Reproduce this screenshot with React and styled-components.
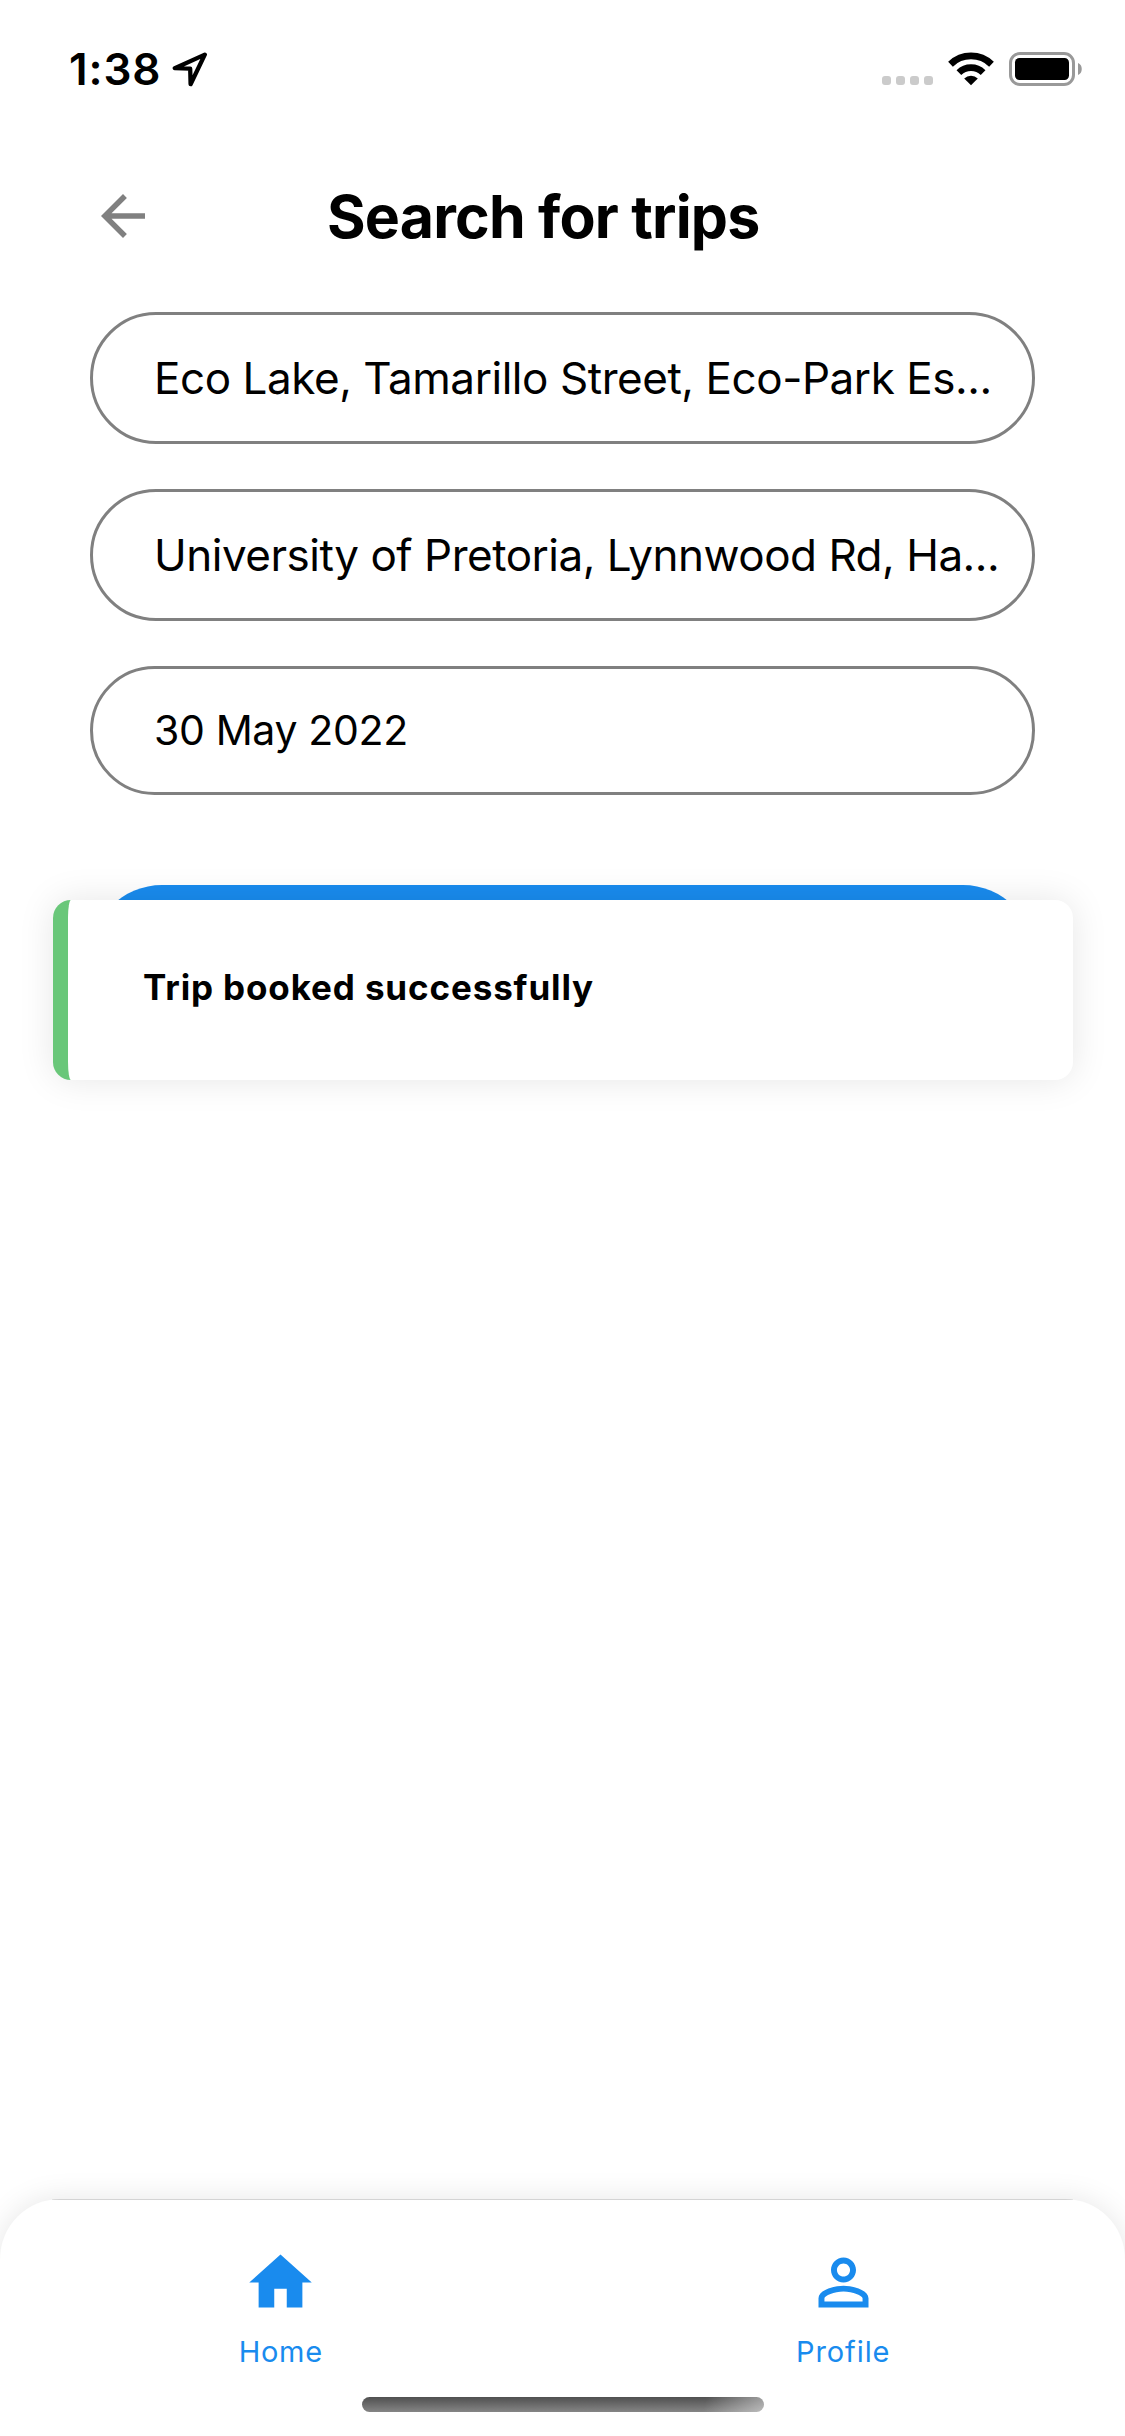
import React from "react";
import styled, { createGlobalStyle, css } from "styled-components";

const blue = "#198bee";

const GlobalStyle = createGlobalStyle`
  *, *::before, *::after { box-sizing: border-box; }
  body { margin: 0; background: #fff; }
`;

const Screen = styled.div`
  width: 1125px;
  height: 2436px;
  display: flex;
  flex-direction: column;
  overflow: hidden;
  background: #fff;
  color: #000;
  font-family: Inter, "Liberation Sans", sans-serif;
`;

const StatusBar = styled.header`
  height: 138px;
  flex: none;
  display: flex;
  align-items: center;
  justify-content: space-between;
  padding: 0 43px 0 69px;
`;

const StatusGroup = styled.div`
  display: flex;
  align-items: center;
  gap: ${(p) => p.$gap}px;
`;

const Time = styled.span`
  font-size: 44px;
  line-height: 54px;
  font-weight: 600;
  letter-spacing: 0.9px;
`;

const SignalDots = styled.div`
  display: flex;
  gap: 5px;
  padding-top: 23px;
`;

const SignalDot = styled.i`
  width: 9px;
  height: 9px;
  border-radius: 3px;
  background: #cbcbcb;
`;

const Glyph = styled.svg`
  display: block;
  flex: none;
`;

const TopBar = styled.div`
  height: 174px;
  flex: none;
  display: flex;
  align-items: center;
  padding: 0 90px 18px;
`;

const BackButton = styled.button`
  border: 0;
  padding: 0;
  background: none;
  color: #808080;
`;

const Title = styled.h1`
  margin: 2px 0 0 171px;
  font-size: 59px;
  line-height: 72px;
  font-weight: 700;
  letter-spacing: -0.8px;
  white-space: nowrap;
`;

const Form = styled.form`
  flex: 1;
  display: flex;
  flex-direction: column;
  gap: 45px;
  padding: 0 90px;
`;

const Field = styled.div`
  height: ${(p) => (p.$compact ? 129 : 132)}px;
  flex: none;
  display: flex;
  align-items: center;
  padding-left: 61px;
  border: 3px solid #808080;
  border-radius: 66px;
  white-space: nowrap;
  ${(p) =>
    p.$compact
      ? css`
          font-size: 41px;
          padding-bottom: 1px;
        `
      : css`
          font-size: 44px;
        `}
  letter-spacing: ${(p) => p.$tracking}px;
`;

const SubmitArea = styled.div`
  position: relative;
  margin-top: 45px;
`;

const SubmitButton = styled.button`
  display: block;
  width: 100%;
  height: 144px;
  border: 0;
  border-radius: 72px;
  background: ${blue};
`;

const Toast = styled.div`
  position: absolute;
  top: 15px;
  left: -37px;
  width: 1020px;
  height: 180px;
  display: flex;
  align-items: center;
  padding: 0 75px 6px;
  border-left: 15px solid #69c779;
  border-radius: 18px;
  background: #fff;
  box-shadow: 0 0 36px rgba(0, 0, 0, 0.1);
  font-size: 35px;
  font-weight: 700;
  letter-spacing: 0.87px;
  white-space: nowrap;
`;

const TabBar = styled.nav`
  height: 237px;
  flex: none;
  display: flex;
  flex-wrap: wrap;
  justify-content: center;
  align-content: flex-start;
  padding-top: 1px;
  border-radius: 60px 60px 0 0;
  background: linear-gradient(#d4d4d4, #d4d4d4) top center / 1021px 1px no-repeat #fff;
  box-shadow: 0 0 30px rgba(0, 0, 0, 0.1);
`;

const Tab = styled.a`
  flex: 0 0 50%;
  height: 197px;
  display: flex;
  flex-direction: column;
  align-items: center;
  padding: 44.5px 1px 0 0;
  color: ${blue};
`;

const TabLabel = styled.span`
  margin-top: 13px;
  font-size: 29px;
  line-height: 38px;
  letter-spacing: ${(p) => p.$tracking}px;
`;

const HomeIndicator = styled.div`
  width: 402px;
  height: 15px;
  border-radius: 8px;
  background: linear-gradient(100deg, transparent 85%, rgba(255, 255, 255, 0.45)),
    linear-gradient(#505050, #858585);
`;

const Icon = ({ size, d }) => (
  <Glyph width={size} height={size} viewBox="0 0 24 24" fill="currentColor">
    <path d={d} />
  </Glyph>
);

const TABS = [
  { label: "Home", tracking: 0.7, d: "M10 20v-6h4v6h5v-8h3L12 3 2 12h3v8z" },
  {
    label: "Profile",
    tracking: 0.9,
    d: "M12 5.9c1.16 0 2.1.94 2.1 2.1s-.94 2.1-2.1 2.1S9.9 9.16 9.9 8s.94-2.1 2.1-2.1m0 9c2.97 0 6.1 1.46 6.1 2.1v1.1H5.9V17c0-.64 3.13-2.1 6.1-2.1M12 4C9.79 4 8 5.79 8 8s1.79 4 4 4 4-1.79 4-4-1.79-4-4-4zm0 9c-2.67 0-8 1.34-8 4v3h16v-3c0-2.66-5.33-4-8-4z",
  },
];

export default function App() {
  return (
    <Screen>
      <GlobalStyle />
      <StatusBar>
        <StatusGroup $gap={11}>
          <Time>1:38</Time>
          <Glyph width="37" height="37" viewBox="0 0 37 37">
            <path
              d="M32.8 3.6 2.8 17.2 18.2 17.7 18.6 33.2Z"
              fill="none"
              stroke="#000"
              strokeWidth="4.3"
              strokeLinejoin="round"
            />
          </Glyph>
        </StatusGroup>
        <StatusGroup $gap={15}>
          <SignalDots>
            <SignalDot />
            <SignalDot />
            <SignalDot />
            <SignalDot />
          </SignalDots>
          <Glyph width="46" height="34" viewBox="0 0 46 34">
            <g fill="none" stroke="#000" strokeWidth="6.8">
              <path d="M2.5 12.2a29.5 29.5 0 0 1 41 0" />
              <path d="M10.9 20.6a17.4 17.4 0 0 1 24.2 0" />
            </g>
            <path d="M16.2 26.4a9.8 9.8 0 0 1 13.6 0L23 33.3Z" />
          </Glyph>
          <Glyph width="73" height="34" viewBox="0 0 73 34">
            <rect x="1.5" y="1.5" width="63" height="31" rx="9.5" fill="none" stroke="#999" strokeWidth="3" />
            <rect x="6" y="6" width="54" height="22" rx="4.5" />
            <path d="M69 11c5 1.500 5 10.500 0 12Z" fill="#999" />
          </Glyph>
        </StatusGroup>
      </StatusBar>

      <TopBar>
        <BackButton type="button" aria-label="Back">
          <Icon size={66} d="M20 11H7.83l5.59-5.59L12 4l-8 8 8 8 1.41-1.41L7.83 13H20v-2z" />
        </BackButton>
        <Title>Search for trips</Title>
      </TopBar>

      <Form>
        <Field $tracking={-0.45}>Eco Lake, Tamarillo Street, Eco-Park Es...</Field>
        <Field $tracking={-0.48}>University of Pretoria, Lynnwood Rd, Ha...</Field>
        <Field $compact $tracking={-0.35}>30 May 2022</Field>
        <SubmitArea>
          <SubmitButton type="button" aria-label="Search" />
          <Toast>Trip booked successfully</Toast>
        </SubmitArea>
      </Form>

      <TabBar>
        {TABS.map((tab) => (
          <Tab key={tab.label}>
            <Icon size={75} d={tab.d} />
            <TabLabel $tracking={tab.tracking}>{tab.label}</TabLabel>
          </Tab>
        ))}
        <HomeIndicator />
      </TabBar>
    </Screen>
  );
}
